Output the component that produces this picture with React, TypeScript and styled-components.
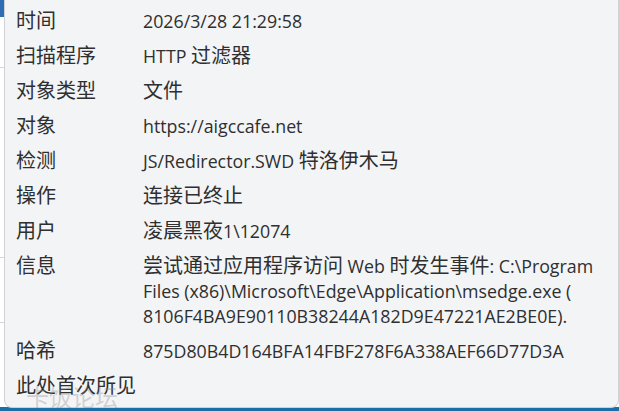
import React from 'react'
import styled, { createGlobalStyle } from 'styled-components'

interface DetailRow {
  label: string
  lines: string[]
}

const GlobalStyle = createGlobalStyle`
  html, body {
    margin: 0;
    padding: 0;
    background: #ffffff;
  }
`

const rows: DetailRow[] = [
  { label: '时间', lines: ['2026/3/28 21:29:58'] },
  { label: '扫描程序', lines: ['HTTP 过滤器'] },
  { label: '对象类型', lines: ['文件'] },
  { label: '对象', lines: ['https://aigccafe.net'] },
  { label: '检测', lines: ['JS/Redirector.SWD 特洛伊木马'] },
  { label: '操作', lines: ['连接已终止'] },
  { label: '用户', lines: ['凌晨黑夜1\\12074'] },
  {
    label: '信息',
    lines: [
      '尝试通过应用程序访问 Web 时发生事件: C:\\Program',
      'Files (x86)\\Microsoft\\Edge\\Application\\msedge.exe (',
      '8106F4BA9E90110B38244A182D9E47221AE2BE0E).'
    ]
  },
  { label: '哈希', lines: ['875D80B4D164BFA14FBF278F6A338AEF66D77D3A'] }
]

// CJK runs get the larger Chinese face, Latin runs stay in the UI face
const MixedText = ({ text }: { text: string }) => (
  <>
    {text.split(/([\u3000-\u9fff\uff00-\uffef]+)/).map((part, i) =>
      i % 2 === 1 ? <Han key={i}>{part}</Han> : part ? <React.Fragment key={i}>{part}</React.Fragment> : null
    )}
  </>
)

const App = () => {
  return (
    <Screen>
      <GlobalStyle />
      <Panel>
        <DetailGrid>
          {rows.map((row) => (
            <React.Fragment key={row.label}>
              <Label>{row.label}</Label>
              <Value>
                {row.lines.map((line, i) => (
                  <Line key={i}>
                    <MixedText text={line} />
                  </Line>
                ))}
              </Value>
            </React.Fragment>
          ))}
        </DetailGrid>
        <Footer>此处首次所见</Footer>
      </Panel>
      <Watermark>卡饭论坛</Watermark>
    </Screen>
  )
}

const Screen = styled.div`
  position: relative;
  width: 619px;
  height: 411px;
  overflow: hidden;
  background:
    linear-gradient(#2f6db3, #2f6db3) 0 0 / 4px 17px no-repeat,
    linear-gradient(#1a6fa8, #1a6fa8) 0 100% / 100% 4px no-repeat,
    linear-gradient(#d6d6d6, #d6d6d6) 0 67px / 4px 1px no-repeat,
    linear-gradient(#d6d6d6, #d6d6d6) 0 257px / 4px 1px no-repeat,
    linear-gradient(#d6d6d6, #d6d6d6) 0 322px / 4px 1px no-repeat,
    #ffffff;
`

const Panel = styled.div`
  box-sizing: border-box;
  margin-left: 4px;
  width: 615px;
  height: 408px;
  padding: 7px 0 0 11px;
  background: #f3f4f6;
  border: 1px solid #cfd1d4;
  border-top: none;
  border-radius: 0 0 8px 8px;
  font-family: 'Noto Sans CJK SC', 'Noto Sans', sans-serif;
  font-size: 20px;
  line-height: 25px;
  color: #2f2f2f;
`

const DetailGrid = styled.div`
  display: grid;
  grid-template-columns: 127px 1fr;
  row-gap: 10px;
`

const Label = styled.div`
  white-space: nowrap;
`

const Value = styled.div`
  display: flex;
  flex-direction: column;
  font-family: 'Open Sans', 'Noto Sans', sans-serif;
  font-size: 17.8px;
`

const Line = styled.div`
  height: 23px;
  padding-top: 2px;
  line-height: 25px;
  white-space: nowrap;
`

const Han = styled.span`
  font-family: 'Noto Sans CJK SC', sans-serif;
  font-size: 20px;
  line-height: 1;
`

const Footer = styled.div`
  margin-top: 10px;
`

const Watermark = styled.div`
  position: absolute;
  left: 26px;
  top: 383px;
  font-family: 'Noto Sans CJK SC', sans-serif;
  font-size: 23px;
  line-height: 26px;
  color: rgba(140, 140, 140, 0.35);
  pointer-events: none;
`

export default App
